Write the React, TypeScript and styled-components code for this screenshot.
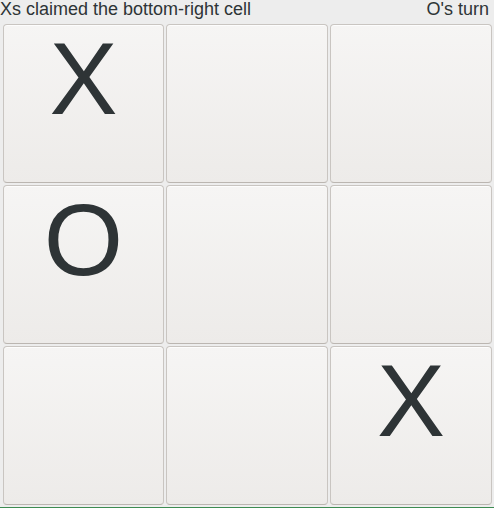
import React from "react";
import styled, { createGlobalStyle } from "styled-components";

const GlobalStyle = createGlobalStyle`
html, body {
    margin: 0;
    padding: 0;
    background: #ededed;
}
body {
    font-family: "Liberation Sans", Arial, sans-serif;
    color: #2e3436;
}
`;

const Page = styled.div`
display: flex;
flex-direction: column;
width: 494px;
height: 508px;
box-sizing: border-box;
border-bottom: 1px solid #3d8b52;
background: #ededed;
`;

const StatusBar = styled.div`
display: flex;
justify-content: space-between;
align-items: flex-start;
height: 24px;
padding: 0 5px 0 0;
font-size: 18px;
line-height: 18px;
color: #2e3436;
`;

const Board = styled.div`
display: grid;
grid-template-columns: 161px 162px 162px;
grid-template-rows: repeat(3, 159px);
gap: 2px;
padding: 0 2px 0 3px;
`;

const Cell = styled.button`
display: flex;
align-items: center;
justify-content: center;
box-sizing: border-box;
margin: 0;
padding: 0 0 50px 0;
border: 1px solid #c9c5c1;
border-bottom-color: #bbb6b1;
border-radius: 4px;
background: linear-gradient(to bottom, #f6f5f4, #edebe9);
box-shadow: inset 0 1px rgba(255, 255, 255, 0.8);
font-family: "Liberation Sans", Arial, sans-serif;
font-size: 102px;
line-height: 1;
color: #2e3436;
cursor: pointer;
`;

const cells = ["X", "", "", "O", "", "", "", "", "X"];

export default function App() {
    return <Page>
        <GlobalStyle />
        <StatusBar>
            <span>Xs claimed the bottom-right cell</span>
            <span>O's turn</span>
        </StatusBar>
        <Board>
            {cells.map((mark, i) => <Cell key={i}>{mark}</Cell>)}
        </Board>
    </Page>
}
